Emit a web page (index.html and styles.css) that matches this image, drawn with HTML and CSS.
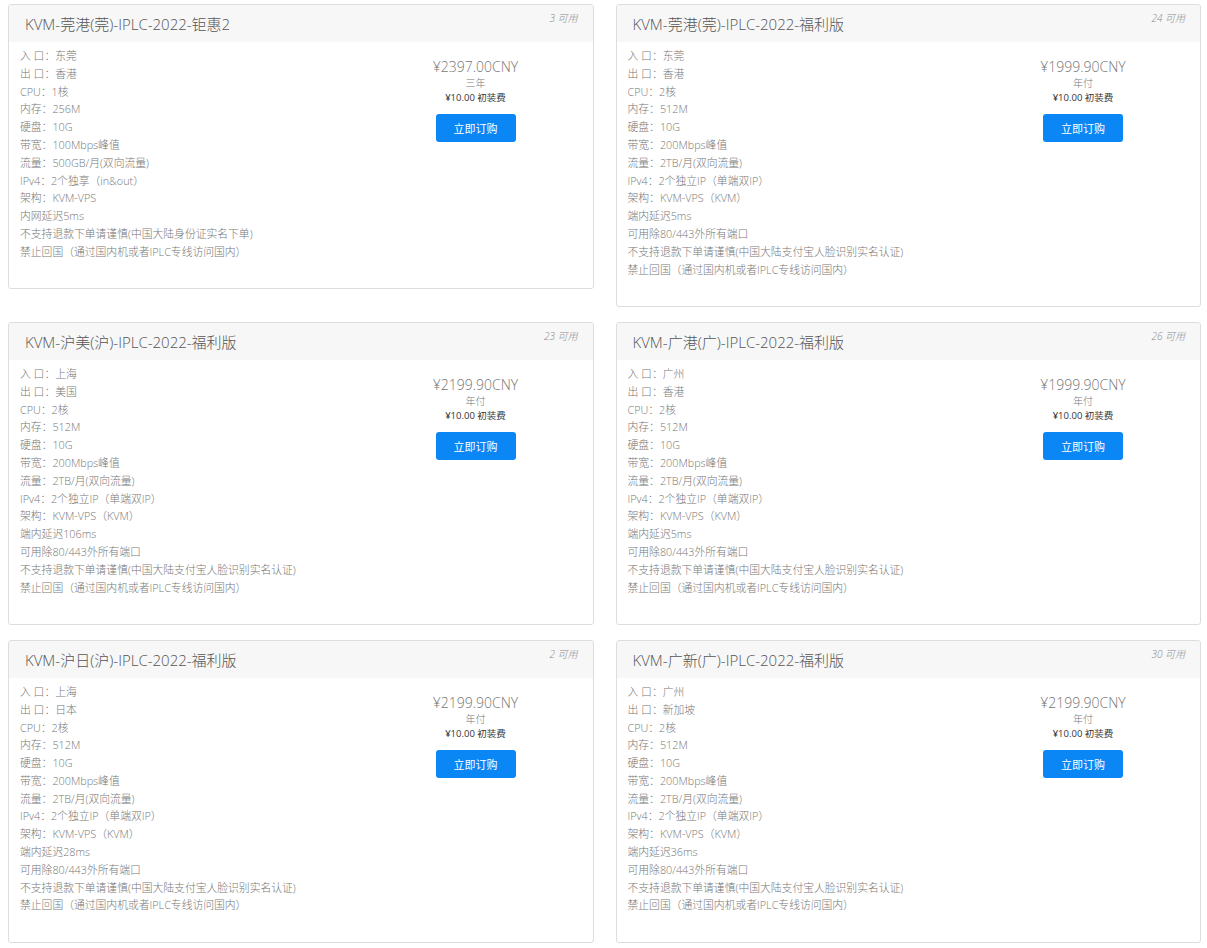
FILE: index.html
```html
<!DOCTYPE html>
<html lang="zh-CN">
<head>
<meta charset="utf-8">
<title>产品列表</title>
<link rel="stylesheet" href="styles.css">
</head>
<body>
<div class="products">

  <div class="card">
    <div class="card-head"><span class="name">KVM-莞港(莞)-IPLC-2022-钜惠2</span><span class="qty">3 可用</span></div>
    <div class="card-body">
      <div class="desc">
        <div>入 口：东莞</div>
        <div>出 口：香港</div>
        <div>CPU：1核</div>
        <div>内存：256M</div>
        <div>硬盘：10G</div>
        <div>带宽：100Mbps峰值</div>
        <div>流量：500GB/月(双向流量)</div>
        <div>IPv4：2个独享（in&amp;out）</div>
        <div>架构：KVM-VPS</div>
        <div>内网延迟5ms</div>
        <div>不支持退款下单请谨慎(中国大陆身份证实名下单)</div>
        <div>禁止回国（通过国内机或者IPLC专线访问国内）</div>
      </div>
      <div class="price">
        <div class="amount">¥2397.00CNY</div>
        <div class="cycle">三年</div>
        <div class="setup">¥10.00 初装费</div>
        <a class="btn" href="#">立即订购</a>
      </div>
    </div>
  </div>

  <div class="card">
    <div class="card-head"><span class="name">KVM-莞港(莞)-IPLC-2022-福利版</span><span class="qty">24 可用</span></div>
    <div class="card-body">
      <div class="desc">
        <div>入 口：东莞</div>
        <div>出 口：香港</div>
        <div>CPU：2核</div>
        <div>内存：512M</div>
        <div>硬盘：10G</div>
        <div>带宽：200Mbps峰值</div>
        <div>流量：2TB/月(双向流量)</div>
        <div>IPv4：2个独立IP（单端双IP）</div>
        <div>架构：KVM-VPS（KVM）</div>
        <div>端内延迟5ms</div>
        <div>可用除80/443外所有端口</div>
        <div>不支持退款下单请谨慎(中国大陆支付宝人脸识别实名认证)</div>
        <div>禁止回国（通过国内机或者IPLC专线访问国内）</div>
      </div>
      <div class="price">
        <div class="amount">¥1999.90CNY</div>
        <div class="cycle">年付</div>
        <div class="setup">¥10.00 初装费</div>
        <a class="btn" href="#">立即订购</a>
      </div>
    </div>
  </div>

  <div class="card">
    <div class="card-head"><span class="name">KVM-沪美(沪)-IPLC-2022-福利版</span><span class="qty">23 可用</span></div>
    <div class="card-body">
      <div class="desc">
        <div>入 口：上海</div>
        <div>出 口：美国</div>
        <div>CPU：2核</div>
        <div>内存：512M</div>
        <div>硬盘：10G</div>
        <div>带宽：200Mbps峰值</div>
        <div>流量：2TB/月(双向流量)</div>
        <div>IPv4：2个独立IP（单端双IP）</div>
        <div>架构：KVM-VPS（KVM）</div>
        <div>端内延迟106ms</div>
        <div>可用除80/443外所有端口</div>
        <div>不支持退款下单请谨慎(中国大陆支付宝人脸识别实名认证)</div>
        <div>禁止回国（通过国内机或者IPLC专线访问国内）</div>
      </div>
      <div class="price">
        <div class="amount">¥2199.90CNY</div>
        <div class="cycle">年付</div>
        <div class="setup">¥10.00 初装费</div>
        <a class="btn" href="#">立即订购</a>
      </div>
    </div>
  </div>

  <div class="card">
    <div class="card-head"><span class="name">KVM-广港(广)-IPLC-2022-福利版</span><span class="qty">26 可用</span></div>
    <div class="card-body">
      <div class="desc">
        <div>入 口：广州</div>
        <div>出 口：香港</div>
        <div>CPU：2核</div>
        <div>内存：512M</div>
        <div>硬盘：10G</div>
        <div>带宽：200Mbps峰值</div>
        <div>流量：2TB/月(双向流量)</div>
        <div>IPv4：2个独立IP（单端双IP）</div>
        <div>架构：KVM-VPS（KVM）</div>
        <div>端内延迟5ms</div>
        <div>可用除80/443外所有端口</div>
        <div>不支持退款下单请谨慎(中国大陆支付宝人脸识别实名认证)</div>
        <div>禁止回国（通过国内机或者IPLC专线访问国内）</div>
      </div>
      <div class="price">
        <div class="amount">¥1999.90CNY</div>
        <div class="cycle">年付</div>
        <div class="setup">¥10.00 初装费</div>
        <a class="btn" href="#">立即订购</a>
      </div>
    </div>
  </div>

  <div class="card">
    <div class="card-head"><span class="name">KVM-沪日(沪)-IPLC-2022-福利版</span><span class="qty">2 可用</span></div>
    <div class="card-body">
      <div class="desc">
        <div>入 口：上海</div>
        <div>出 口：日本</div>
        <div>CPU：2核</div>
        <div>内存：512M</div>
        <div>硬盘：10G</div>
        <div>带宽：200Mbps峰值</div>
        <div>流量：2TB/月(双向流量)</div>
        <div>IPv4：2个独立IP（单端双IP）</div>
        <div>架构：KVM-VPS（KVM）</div>
        <div>端内延迟28ms</div>
        <div>可用除80/443外所有端口</div>
        <div>不支持退款下单请谨慎(中国大陆支付宝人脸识别实名认证)</div>
        <div>禁止回国（通过国内机或者IPLC专线访问国内）</div>
      </div>
      <div class="price">
        <div class="amount">¥2199.90CNY</div>
        <div class="cycle">年付</div>
        <div class="setup">¥10.00 初装费</div>
        <a class="btn" href="#">立即订购</a>
      </div>
    </div>
  </div>

  <div class="card">
    <div class="card-head"><span class="name">KVM-广新(广)-IPLC-2022-福利版</span><span class="qty">30 可用</span></div>
    <div class="card-body">
      <div class="desc">
        <div>入 口：广州</div>
        <div>出 口：新加坡</div>
        <div>CPU：2核</div>
        <div>内存：512M</div>
        <div>硬盘：10G</div>
        <div>带宽：200Mbps峰值</div>
        <div>流量：2TB/月(双向流量)</div>
        <div>IPv4：2个独立IP（单端双IP）</div>
        <div>架构：KVM-VPS（KVM）</div>
        <div>端内延迟36ms</div>
        <div>可用除80/443外所有端口</div>
        <div>不支持退款下单请谨慎(中国大陆支付宝人脸识别实名认证)</div>
        <div>禁止回国（通过国内机或者IPLC专线访问国内）</div>
      </div>
      <div class="price">
        <div class="amount">¥2199.90CNY</div>
        <div class="cycle">年付</div>
        <div class="setup">¥10.00 初装费</div>
        <a class="btn" href="#">立即订购</a>
      </div>
    </div>
  </div>

</div>
</body>
</html>
```
FILE: styles.css
```css
html, body {
  margin: 0;
  padding: 0;
  background: #fff;
}
body {
  font-family: "Open Sans", "Noto Sans CJK SC", sans-serif;
  color: #777;
}
.products {
  display: grid;
  grid-template-columns: 1fr 1fr;
  column-gap: 22px;
  row-gap: 15px;
  align-items: start;
  padding: 4px 6px 0 8px;
}
.card {
  border: 1px solid #ddd;
  border-radius: 3px;
  background: #fff;
  overflow: hidden;
}
.card-head {
  display: flex;
  justify-content: space-between;
  align-items: flex-start;
  height: 37px;
  padding: 0 15px 0 16px;
  background: #f7f7f7;
}
.name {
  padding-top: 9px;
  font-size: 15px;
  line-height: 20px;
  font-weight: 300;
  color: #555;
}
.qty {
  padding-top: 6px;
  font-size: 10px;
  line-height: 14px;
  font-style: italic;
  font-weight: 300;
  color: #888;
}
.card-body {
  display: grid;
  grid-template-columns: 1fr 210px;
  padding: 5px 12px 27.6px 11px;
}
.desc {
  font-size: 10.8px;
  line-height: 17.8px;
  font-weight: 300;
  color: #777;
}
.price {
  display: flex;
  flex-direction: column;
  align-items: center;
  padding-top: 10px;
}
.amount {
  font-size: 14px;
  line-height: 20px;
  font-weight: 300;
  color: #777;
}
.cycle {
  font-size: 10px;
  line-height: 13px;
  font-weight: 300;
  color: #777;
}
.setup {
  font-size: 9.5px;
  line-height: 15px;
  font-weight: 400;
  color: #333;
}
.btn {
  display: flex;
  align-items: center;
  justify-content: center;
  width: 80px;
  height: 28px;
  margin-top: 9px;
  border-radius: 3px;
  background: #0a86f5;
  color: #fff;
  font-size: 11px;
  text-decoration: none;
}
```
